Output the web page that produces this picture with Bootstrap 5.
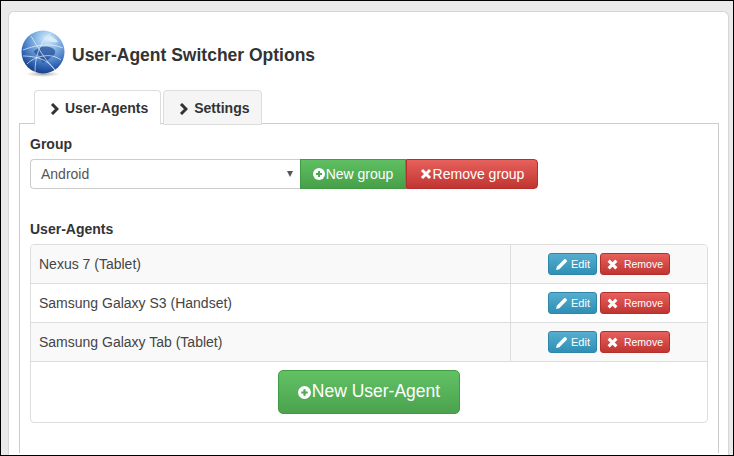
<!DOCTYPE html>
<html lang="en">
<head>
<meta charset="utf-8">
<title>User-Agent Switcher Options</title>
<link href="https://cdn.jsdelivr.net/npm/bootstrap@5.3.0/dist/css/bootstrap.min.css" rel="stylesheet">
<style>
html,body{height:100%;}
body{font-family:"Liberation Sans",Arial,sans-serif;font-size:14px;color:#333;background:#eaeaea;overflow:hidden;}
.shell{width:734px;height:456px;border:1px solid #000;padding:10px 4px 0 7px;overflow:hidden;}
.sheet{background:#fff;border:1px solid #d6d6d6;border-bottom:0;border-radius:6px 6px 0 0;height:445px;padding:19px 9px 0 10px;}
.head-row{height:46px;margin-left:2px;gap:7px;}
.title-text{font-size:17.5px;font-weight:700;margin:2px 0 0;color:#333;line-height:20px;}
.tabbar{margin:13px 0 -1px 15px;gap:2px;position:relative;z-index:1;border:0;flex-wrap:nowrap;}
.tabbar .nav-link{font-size:14px;font-weight:700;color:#333;height:35px;padding:8px 12px 0 15px;border:1px solid #ddd;background:#f5f5f5;border-radius:4px 4px 0 0;line-height:18px;display:flex;align-items:flex-start;gap:6px;}
.tabbar .nav-link.active{background:#fff;color:#333;border-color:#ddd #ddd #fff;}
.pane-box{border:1px solid #ccc;border-bottom:0;height:330px;padding:12px 10px 0 10px;}
.field-label{font-size:14px;font-weight:700;margin:0 0 6px;line-height:17px;display:block;}
.group-row{height:30px;}
.pick{width:270px;height:30px;color:#555;border:1px solid #ccc;border-right:0;border-radius:4px 0 0 4px;padding:0 7px 0 10px;display:flex;align-items:center;justify-content:space-between;background:#fff;}
.pick .caret-mark{width:0;height:0;border-left:3.5px solid transparent;border-right:3.5px solid transparent;border-top:6px solid #555;}
.flatbtn{display:inline-flex;align-items:center;justify-content:center;color:#fff;border-radius:0;font-size:14px;padding:0;line-height:1;gap:1px;}
.flatbtn:hover{color:#fff;}
.gr-green{background:linear-gradient(#5fbf62,#47a049);border:1px solid #419a44;}
.gr-red{background:linear-gradient(#e7605c,#c03531);border:1px solid #b52f2c;}
.gr-blue{background:linear-gradient(#55aed0,#2f8fb4);border:1px solid #2e87a8;}
.btn-ng{width:106px;height:30px;}
.btn-rg{width:132px;height:30px;border-radius:0 4px 4px 0;}
.agents-label{margin:32px 0 6px;}
.agents-box{border:1px solid #ddd;border-radius:4px;overflow:hidden;width:678px;}
.agent-row{height:39px;border-bottom:1px solid #ddd;}
.row-tint{background:#f9f9f9;}
.agent-name{width:480px;padding-left:8px;border-right:1px solid #ddd;height:100%;display:flex;align-items:center;color:#444;}
.agent-acts{padding-left:37px;gap:3px;height:100%;}
.btn-edit{width:49px;height:22px;font-size:11px;border-radius:3px;gap:3px;}
.btn-del{width:70px;height:22px;font-size:10.5px;border-radius:3px;gap:6px;}
.add-row{height:60px;}
.btn-add{width:182px;height:44px;font-size:17.5px;border-radius:5px;background:linear-gradient(#62c165,#4ba34d);}
</style>
</head>
<body>
<div class="shell">
  <div class="sheet">
    <div class="d-flex align-items-center head-row">
      <svg width="44" height="48" viewBox="0 0 44 48" aria-hidden="true">
        <defs>
          <radialGradient id="gl" cx="0.6" cy="0.2" r="0.9">
            <stop offset="0" stop-color="#d8effb"/><stop offset="0.35" stop-color="#7fb0e2"/><stop offset="0.72" stop-color="#2f62b4"/><stop offset="1" stop-color="#102c66"/>
          </radialGradient>
          <radialGradient id="sh" cx="0.5" cy="0.5" r="0.5"><stop offset="0" stop-color="#555" stop-opacity=".55"/><stop offset="1" stop-color="#777" stop-opacity="0"/></radialGradient>
        </defs>
        <ellipse cx="22" cy="44" rx="17" ry="3" fill="url(#sh)"/>
        <circle cx="22" cy="22" r="21.5" fill="url(#gl)"/>
        <path d="M13 21c5-4 11-6 18-3 4 2 4 5 1 8-4 2-6 6-10 7-3-3-2-7-5-8-2 0-4-2-4-4z" fill="#1c4a94" opacity=".7"/>
        <path d="M28 5c3 2 8 4 9 7-3 1-7 0-10-2z" fill="#e6f3fb" opacity=".75"/>
        <path d="M2 20C12 16 28 12 42 18M6 34C14 26 30 22 40 30M14 42C14 28 18 12 30 3M10 6c6 10 14 24 24 34M2 26c10 0 24 2 32 14" fill="none" stroke="#eef5fc" stroke-width=".8" opacity=".85"/>
      </svg>
      <h1 class="title-text">User-Agent Switcher Options</h1>
    </div>
    <ul class="nav nav-tabs tabbar">
      <li class="nav-item"><a class="nav-link active" href="#"><svg width="9" height="12" viewBox="0 0 9 12" class="mt-1" aria-hidden="true"><path d="M2 1l5 5-5 5" fill="none" stroke="#333" stroke-width="3"/></svg>User-Agents</a></li>
      <li class="nav-item"><a class="nav-link" href="#"><svg width="9" height="12" viewBox="0 0 9 12" class="mt-1" aria-hidden="true"><path d="M2 1l5 5-5 5" fill="none" stroke="#333" stroke-width="3"/></svg>Settings</a></li>
    </ul>
    <div class="pane-box">
      <label class="field-label">Group</label>
      <div class="d-flex group-row">
        <div class="pick"><span>Android</span><span class="caret-mark"></span></div>
        <a class="btn flatbtn gr-green btn-ng" href="#"><svg width="12" height="12" viewBox="0 0 12 12" aria-hidden="true"><circle cx="6" cy="6" r="6" fill="#fff"/><path d="M6 3v6M3 6h6" stroke="#4fa951" stroke-width="2"/></svg>New group</a>
        <a class="btn flatbtn gr-red btn-rg" href="#"><svg width="12" height="12" viewBox="0 0 12 12" aria-hidden="true"><path d="M2 2l8 8M10 2l-8 8" stroke="#fff" stroke-width="3"/></svg>Remove group</a>
      </div>
      <label class="field-label agents-label">User-Agents</label>
      <div class="agents-box">
        <div class="d-flex align-items-center agent-row row-tint">
          <div class="agent-name">Nexus 7 (Tablet)</div>
          <div class="d-flex align-items-center agent-acts">
            <a class="btn flatbtn gr-blue btn-edit" href="#"><svg width="13" height="13" viewBox="0 0 12 12" aria-hidden="true"><path d="M1 11l.7-3L8.500 1.200a1 1 0 0 1 1.400 0l.9.9a1 1 0 0 1 0 1.400L4 10.300z" fill="#fff"/></svg>Edit</a>
            <a class="btn flatbtn gr-red btn-del" href="#"><svg width="11" height="11" viewBox="0 0 10 10" aria-hidden="true"><path d="M1.500 1.500l7 7M8.500 1.500l-7 7" stroke="#fff" stroke-width="2.800"/></svg>Remove</a>
          </div>
        </div>
        <div class="d-flex align-items-center agent-row">
          <div class="agent-name">Samsung Galaxy S3 (Handset)</div>
          <div class="d-flex align-items-center agent-acts">
            <a class="btn flatbtn gr-blue btn-edit" href="#"><svg width="13" height="13" viewBox="0 0 12 12" aria-hidden="true"><path d="M1 11l.7-3L8.500 1.200a1 1 0 0 1 1.400 0l.9.9a1 1 0 0 1 0 1.400L4 10.300z" fill="#fff"/></svg>Edit</a>
            <a class="btn flatbtn gr-red btn-del" href="#"><svg width="11" height="11" viewBox="0 0 10 10" aria-hidden="true"><path d="M1.500 1.500l7 7M8.500 1.500l-7 7" stroke="#fff" stroke-width="2.800"/></svg>Remove</a>
          </div>
        </div>
        <div class="d-flex align-items-center agent-row row-tint">
          <div class="agent-name">Samsung Galaxy Tab (Tablet)</div>
          <div class="d-flex align-items-center agent-acts">
            <a class="btn flatbtn gr-blue btn-edit" href="#"><svg width="13" height="13" viewBox="0 0 12 12" aria-hidden="true"><path d="M1 11l.7-3L8.500 1.200a1 1 0 0 1 1.400 0l.9.9a1 1 0 0 1 0 1.400L4 10.300z" fill="#fff"/></svg>Edit</a>
            <a class="btn flatbtn gr-red btn-del" href="#"><svg width="11" height="11" viewBox="0 0 10 10" aria-hidden="true"><path d="M1.500 1.500l7 7M8.500 1.500l-7 7" stroke="#fff" stroke-width="2.800"/></svg>Remove</a>
          </div>
        </div>
        <div class="d-flex align-items-center justify-content-center add-row">
          <a class="btn flatbtn gr-green btn-add" href="#"><svg width="13" height="13" viewBox="0 0 12 12" aria-hidden="true"><circle cx="6" cy="6" r="6" fill="#fff"/><path d="M6 3v6M3 6h6" stroke="#4fa951" stroke-width="2"/></svg>New User-Agent</a>
        </div>
      </div>
    </div>
  </div>
</div>
<script src="https://cdn.jsdelivr.net/npm/bootstrap@5.3.0/dist/js/bootstrap.bundle.min.js"></script>
</body>
</html>
